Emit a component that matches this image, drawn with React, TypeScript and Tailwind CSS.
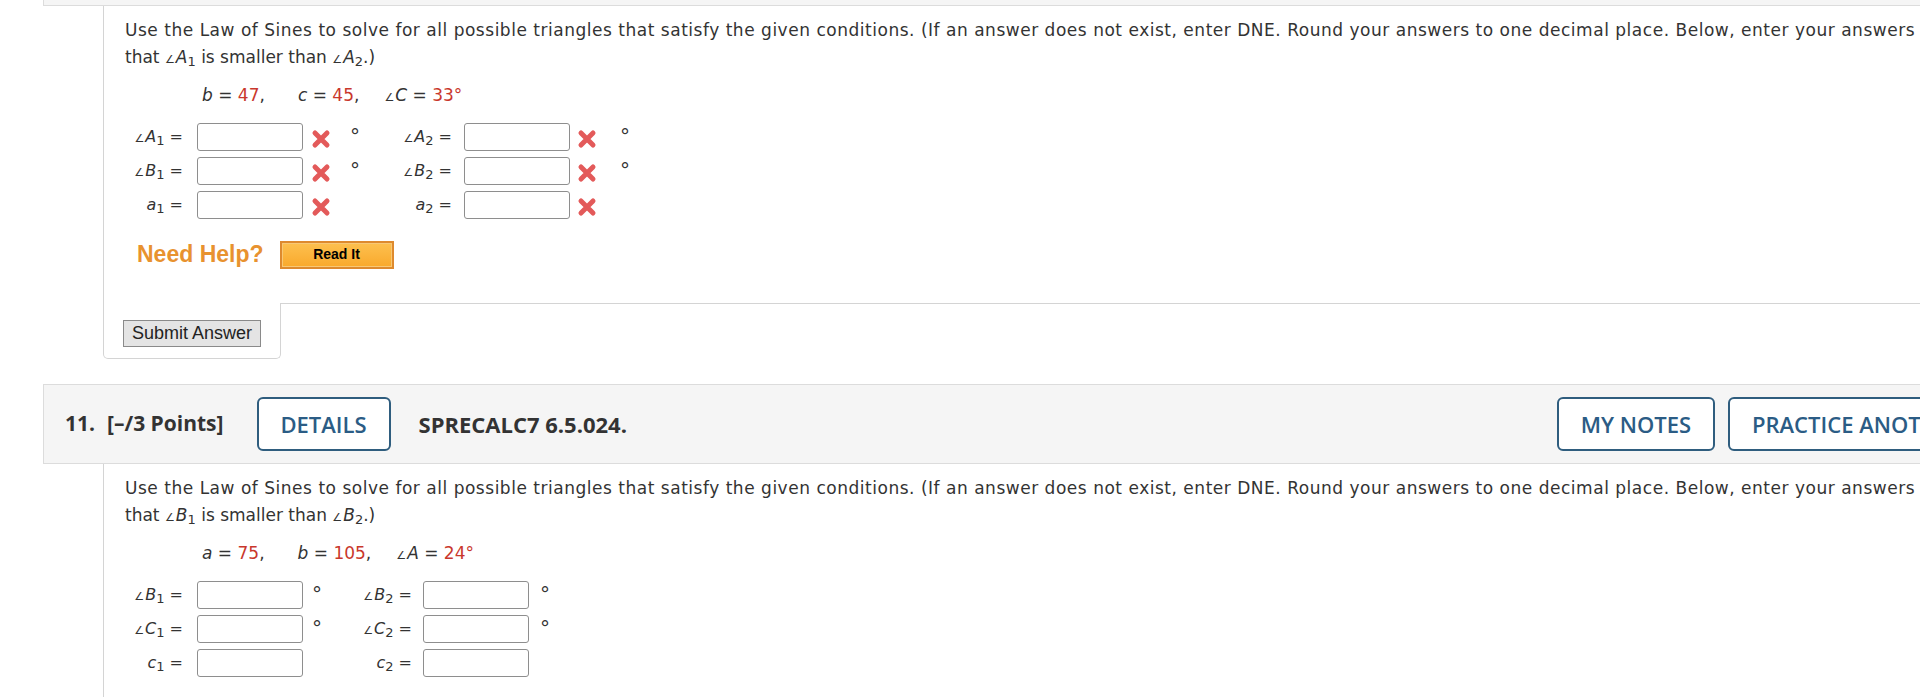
import type { ReactNode } from "react"

interface Field {
  angle: boolean
  v: string
  s: string
  deg: boolean
}

const q1Left: Field[] = [
  { angle: true, v: "A", s: "1", deg: true },
  { angle: true, v: "B", s: "1", deg: true },
  { angle: false, v: "a", s: "1", deg: false },
]
const q1Right: Field[] = [
  { angle: true, v: "A", s: "2", deg: true },
  { angle: true, v: "B", s: "2", deg: true },
  { angle: false, v: "a", s: "2", deg: false },
]
const q2Left: Field[] = [
  { angle: true, v: "B", s: "1", deg: true },
  { angle: true, v: "C", s: "1", deg: true },
  { angle: false, v: "c", s: "1", deg: false },
]
const q2Right: Field[] = [
  { angle: true, v: "B", s: "2", deg: true },
  { angle: true, v: "C", s: "2", deg: true },
  { angle: false, v: "c", s: "2", deg: false },
]

function Ang() {
  return <span className="text-[11px] mr-[1px] not-italic">∠</span>
}

function Var({ v, s }: { v: string; s?: string }) {
  return (
    <>
      <i>{v}</i>
      {s && <sub className="text-[13px]">{s}</sub>}
    </>
  )
}

function Red({ children }: { children: ReactNode }) {
  return <span className="text-[#c9372c]">{children}</span>
}

function Label({ f }: { f: Field }) {
  return (
    <span className="whitespace-nowrap">
      {f.angle && <Ang />}
      <Var v={f.v} s={f.s} />
      {" ="}
    </span>
  )
}

// red wrong-answer mark
function Cross() {
  return (
    <svg width="20" height="20" viewBox="0 0 20 20" className="mt-[3px]">
      <path d="M4 4 L16 16 M16 4 L4 16" stroke="#e35a5a" strokeWidth="5" strokeLinecap="round" />
    </svg>
  )
}

function Box() {
  return <div className="w-[106px] h-[28px] border border-[#8e8e8e] rounded-[3px] bg-white shrink-0" />
}

function Deg({ show }: { show: boolean }) {
  return <div className="w-[8px] text-[20px] leading-[28px] -mt-[3px] shrink-0">{show ? "°" : ""}</div>
}

function RowsMarked({ left, right }: { left: Field[]; right: Field[] }) {
  return (
    <div className="mt-[12px] flex flex-col gap-[6px]">
      {left.map((f, i) => (
        <div key={i} className="flex items-center h-[28px] text-[16px]">
          <div className="w-[58px] text-right"><Label f={f} /></div>
          <div className="ml-[14px]"><Box /></div>
          <div className="ml-[8px] w-[20px]"><Cross /></div>
          <div className="ml-[19px]"><Deg show={f.deg} /></div>
          <div className="w-[94px] text-right"><Label f={right[i]} /></div>
          <div className="ml-[12px]"><Box /></div>
          <div className="ml-[7px] w-[20px]"><Cross /></div>
          <div className="ml-[23px]"><Deg show={right[i].deg} /></div>
        </div>
      ))}
    </div>
  )
}

function RowsPlain({ left, right }: { left: Field[]; right: Field[] }) {
  return (
    <div className="mt-[12px] flex flex-col gap-[6px]">
      {left.map((f, i) => (
        <div key={i} className="flex items-center h-[28px] text-[16px]">
          <div className="w-[58px] text-right"><Label f={f} /></div>
          <div className="ml-[14px]"><Box /></div>
          <div className="ml-[9px]"><Deg show={f.deg} /></div>
          <div className="w-[92px] text-right"><Label f={right[i]} /></div>
          <div className="ml-[11px]"><Box /></div>
          <div className="ml-[11px]"><Deg show={right[i].deg} /></div>
        </div>
      ))}
    </div>
  )
}

function NeedHelp() {
  return (
    <div className="mt-[22px] pl-[12px] flex items-center h-[27px]">
      <span className="font-['Liberation_Sans',Arial,sans-serif] font-bold text-[23px] text-[#e8922f]">Need Help?</span>
      <button className="ml-[16px] w-[114px] h-[28px] border-2 border-[#de8a2e] bg-[linear-gradient(#fdc04f,#f9a92c)] shadow-[inset_0_0_0_1px_#f8c874] font-['Liberation_Sans',Arial,sans-serif] font-bold text-[14px] text-black">
        Read It
      </button>
    </div>
  )
}

function Intro({ a }: { a: string }) {
  return (
    <p className="text-[17px] leading-[27px] whitespace-nowrap">
      <span className="tracking-[0.52px]">
        Use the Law of Sines to solve for all possible triangles that satisfy the given conditions. (If an answer does not exist, enter DNE. Round your answers to one decimal place. Below, enter your answers so
      </span>
      <br />
      that <Ang /><Var v={a} s="1" /> is smaller than <Ang /><Var v={a} s="2" />.)
    </p>
  )
}

function Given({ items }: { items: ReactNode[] }) {
  return (
    <div className="mt-[9px] pl-[77px] text-[17px] leading-[27px] whitespace-nowrap flex">
      <span>{items[0]}</span>
      <span className="ml-[33px]">{items[1]}</span>
      <span className="ml-[25px]">{items[2]}</span>
    </div>
  )
}

export default function App() {
  return (
    <div className="w-[1920px] h-[697px] overflow-hidden bg-white text-[#333] font-['DejaVu_Sans',Verdana,sans-serif]">
      <div className="w-[2300px] pl-[43px]">
        <div className="h-[6px] bg-[#f5f5f5] border-l border-b border-[#dcdcdc]" />

        <div className="ml-[60px] border-l border-[#d4d4d4] pl-[21px] pt-[11px] pb-[35px]">
          <Intro a="A" />
          <Given
            items={[
              <><Var v="b" /> = <Red>47</Red>,</>,
              <><Var v="c" /> = <Red>45</Red>,</>,
              <><Ang /><Var v="C" /> = <Red>33°</Red></>,
            ]}
          />
          <RowsMarked left={q1Left} right={q1Right} />
          <NeedHelp />
        </div>

        <div className="ml-[60px] flex">
          <div className="w-[178px] border-l border-r border-b border-[#d4d4d4] rounded-b-[5px] pl-[19px] pt-[17px] pb-[11px]">
            <button className="w-[138px] h-[27px] bg-[#e4e4e4] border border-[#8a8a8a] font-['Liberation_Sans',Arial,sans-serif] text-[18px] leading-[25px] text-[#222]">
              Submit Answer
            </button>
          </div>
          <div className="flex-1 border-t border-[#d4d4d4]" />
        </div>

        <div className="mt-[25px] h-[80px] bg-[#f5f5f5] border border-[#dcdcdc] flex items-center pl-[21px] font-['Open_Sans',sans-serif]">
          <div className="w-[1492px] flex items-center shrink-0">
            <span className="text-[21px] font-bold text-[#333]">
              11.<span className="ml-[12px]">[–/3 Points]</span>
            </span>
            <button className="ml-[33px] w-[134px] h-[54px] rounded-[6px] border-2 border-[#2f5d7e] bg-white text-[#2b5c85] text-[22px] font-semibold">
              DETAILS
            </button>
            <span className="ml-[28px] text-[22px] font-bold text-[#333]">SPRECALC7 6.5.024.</span>
          </div>
          <button className="w-[158px] h-[54px] shrink-0 rounded-[6px] border-2 border-[#2f5d7e] bg-white text-[#2b5c85] text-[22px] font-semibold">
            MY NOTES
          </button>
          <button className="ml-[13px] h-[54px] px-[22px] shrink-0 rounded-[6px] border-2 border-[#2f5d7e] bg-white text-[#2b5c85] text-[22px] font-semibold whitespace-nowrap">
            PRACTICE ANOTHER
          </button>
        </div>

        <div className="ml-[60px] border-l border-[#d4d4d4] pl-[21px] pt-[11px] pb-[35px]">
          <Intro a="B" />
          <Given
            items={[
              <><Var v="a" /> = <Red>75</Red>,</>,
              <><Var v="b" /> = <Red>105</Red>,</>,
              <><Ang /><Var v="A" /> = <Red>24°</Red></>,
            ]}
          />
          <RowsPlain left={q2Left} right={q2Right} />
          <NeedHelp />
        </div>
      </div>
    </div>
  )
}
